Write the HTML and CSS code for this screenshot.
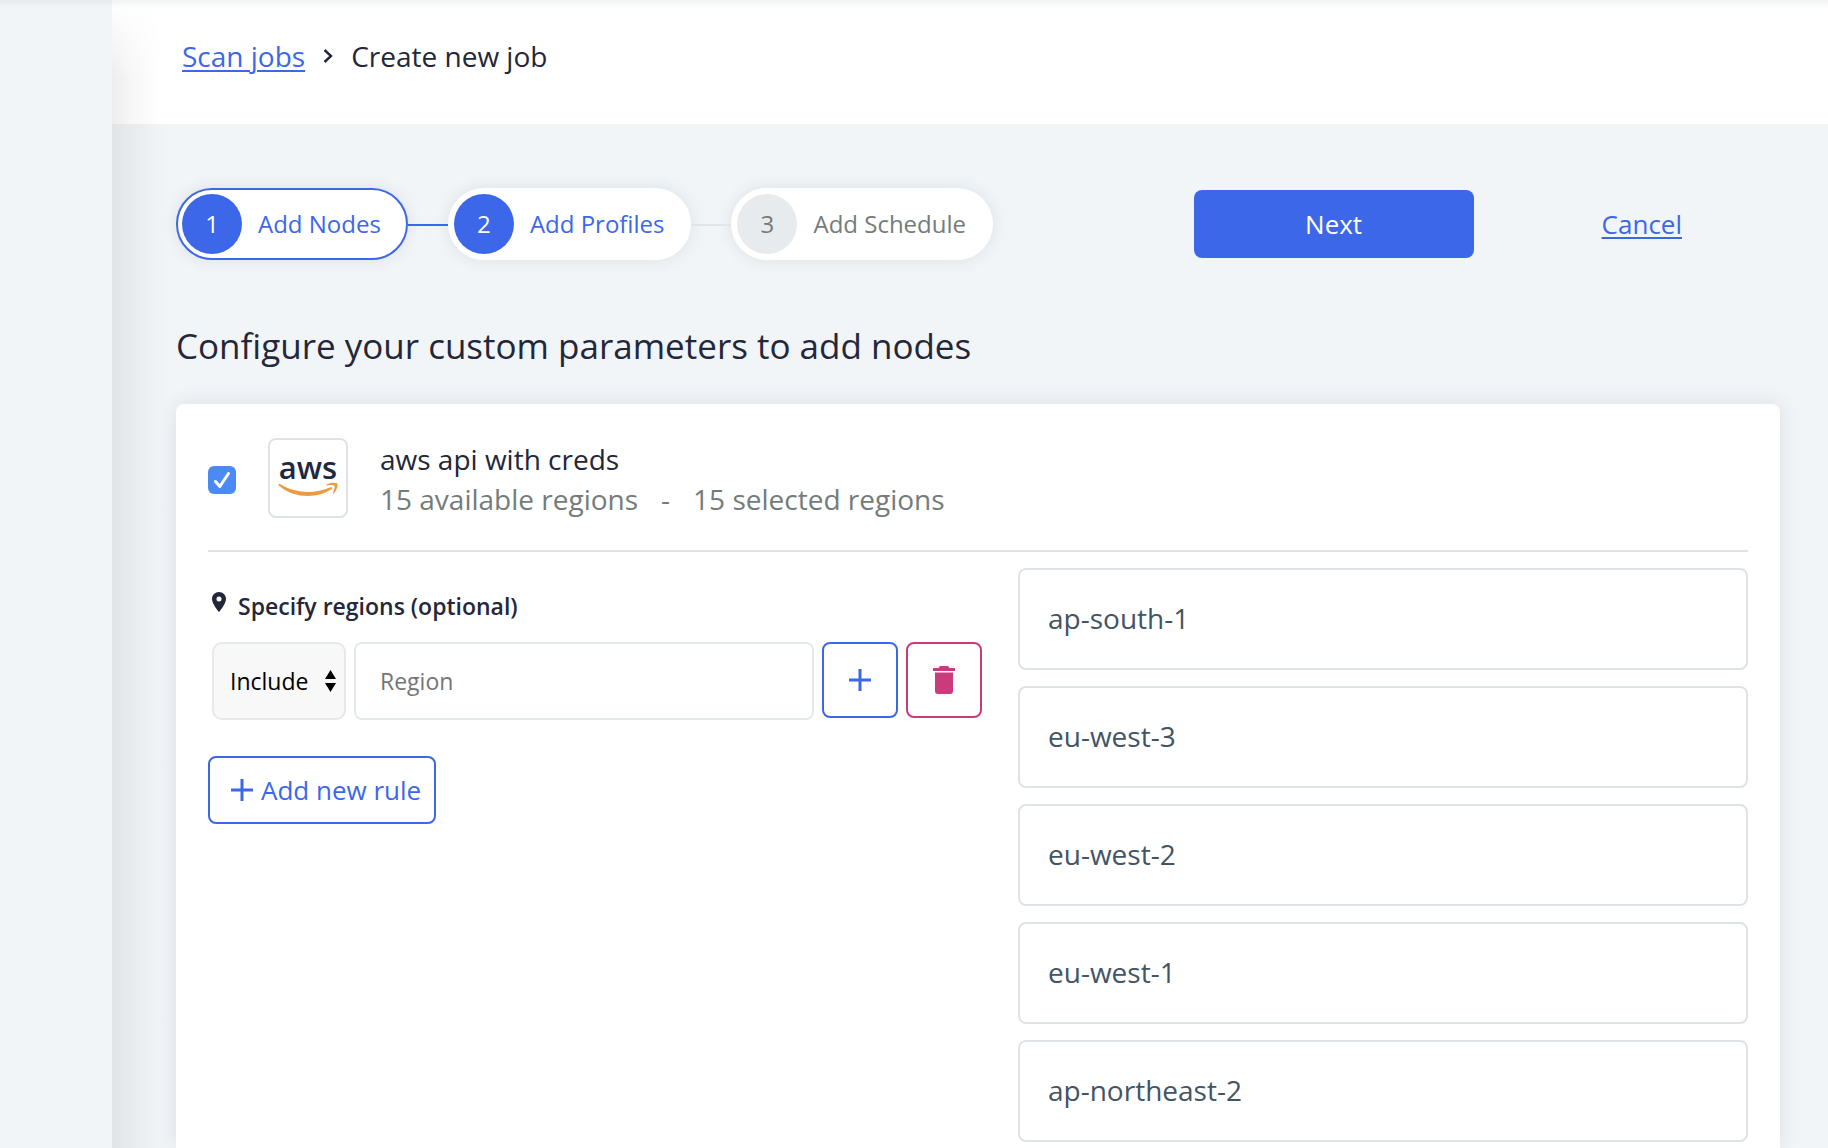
FILE: index.html
```html
<!DOCTYPE html>
<html lang="en">
<head>
<meta charset="utf-8">
<meta name="viewport" content="width=device-width, initial-scale=1">
<title>Create new job</title>
<link rel="stylesheet" href="styles.css">
</head>
<body>
<div class="app">
  <aside class="sidebar"></aside>
  <div class="page">
    <header class="topbar">
      <nav class="breadcrumbs" aria-label="Breadcrumb">
        <a class="link" href="#jobs">Scan jobs</a>
        <svg class="chevron" width="10" height="16" viewBox="0 0 10 16" aria-hidden="true"><path d="M1.5 2 L8 8 L1.5 14" fill="none" stroke="currentColor" stroke-width="2.4"/></svg>
        <span>Create new job</span>
      </nav>
    </header>
    <main class="content">
      <div class="wizard">
        <ol class="steps">
          <li class="step step-current"><span class="step-number">1</span><span class="step-label">Add Nodes</span></li>
          <li class="step step-ready"><span class="step-number">2</span><span class="step-label">Add Profiles</span></li>
          <li class="step"><span class="step-number">3</span><span class="step-label">Add Schedule</span></li>
        </ol>
        <div class="actions">
          <button class="next" type="button">Next</button>
          <a class="link cancel" href="#cancel">Cancel</a>
        </div>
      </div>

      <h1 class="title">Configure your custom parameters to add nodes</h1>

      <section class="card">
        <div class="card-head">
          <input class="check" type="checkbox" id="node" checked>
          <div class="logo">
            <svg width="76" height="76" viewBox="0 0 76 76" aria-hidden="true">
              <text class="logo-text" x="38" y="39" text-anchor="middle">aws</text>
              <path fill="#ee9b40" d="M8.4 44.6 C8.6 43.8 9.4 43.8 10.2 44.3 C26 53.6 44 54.3 60.6 47.3 C62 46.7 63 48 61.8 49 C47 59 23.500 58.500 8.800 45.400 Z"/>
              <path fill="#ee9b40" d="M56.600 44.600 C59.500 42.200 65.500 42.200 67.300 43.500 C68.300 45.500 66.500 51 63.600 53.600 C63 54 62.600 53.700 62.900 53 C64 50.500 65 47 64.600 45.900 C63.600 44.900 60 45 57.300 45.400 C56.500 45.500 56.100 45 56.600 44.600 Z"/>
            </svg>
          </div>
          <label class="node" for="node">
            <span class="node-name">aws api with creds</span>
            <span class="node-meta"><span>15 available regions</span><span>-</span><span>15 selected regions</span></span>
          </label>
        </div>

        <div class="card-body">
          <form class="rules">
            <fieldset class="rule-group">
              <legend class="rule-title">
                <svg class="pin" width="14" height="20" viewBox="0 0 14 20" aria-hidden="true"><path fill="currentColor" fill-rule="evenodd" d="M7 0 C3.100 0 0 3.100 0 7 C0 12 7 20 7 20 C7 20 14 12 14 7 C14 3.100 10.900 0 7 0 Z M7 4.500 A2.500 2.500 0 1 1 7 9.500 A2.500 2.500 0 1 1 7 4.500 Z"/></svg>
                Specify regions (optional)
              </legend>
              <div class="rule">
                <div class="select-box">
                  <select class="mode" aria-label="Rule type"><option>Include</option><option>Exclude</option></select>
                  <svg class="select-arrows" width="11" height="22" viewBox="0 0 11 22" aria-hidden="true"><path d="M5.500 0 L11 9 H0 Z M0 13 H11 L5.500 22 Z"/></svg>
                </div>
                <input class="region-input" type="text" placeholder="Region" aria-label="Region">
                <button class="icon-button" type="button" aria-label="Add region">
                  <svg width="22" height="22" viewBox="0 0 22 22" aria-hidden="true"><path d="M11 0 V22 M0 11 H22" fill="none" stroke="currentColor" stroke-width="3"/></svg>
                </button>
                <button class="icon-button danger" type="button" aria-label="Delete rule">
                  <svg width="22" height="28" viewBox="0 0 22 28" aria-hidden="true"><path fill="currentColor" d="M0 2 H5.500 L7 0 H15 L16.500 2 H22 V5 H0 Z M2 6.500 H20 V25 Q20 28 17 28 H5 Q2 28 2 25 Z"/></svg>
                </button>
              </div>
            </fieldset>
            <button class="add-rule" type="button">
              <svg width="22" height="22" viewBox="0 0 22 22" aria-hidden="true"><path d="M11 0 V22 M0 11 H22" fill="none" stroke="currentColor" stroke-width="3"/></svg>
              Add new rule
            </button>
          </form>
          <ul class="regions">
            <li class="region">ap-south-1</li>
            <li class="region">eu-west-3</li>
            <li class="region">eu-west-2</li>
            <li class="region">eu-west-1</li>
            <li class="region">ap-northeast-2</li>
          </ul>
        </div>
      </section>
    </main>
  </div>
</div>
</body>
</html>
```
FILE: styles.css
```css
:root {
  --blue: #3d67e9;
  --ink: #232739;
  --muted: #737c7a;
  --line: #dee3e7;
  --ground: #f1f5f8;
}

* { box-sizing: border-box; }

body {
  margin: 0;
  background: var(--ground);
  color: var(--ink);
  font: 28px/40px "Open Sans", "Noto Sans", sans-serif;
}

button, input, select { font: inherit; color: inherit; margin: 0; }

ol, ul { list-style: none; margin: 0; padding: 0; }

.app {
  display: flex;
  min-height: 100vh;
}

.sidebar {
  flex: 0 0 112px;
  background-image: linear-gradient(to bottom, rgba(50, 60, 70, .06), transparent 8px);
}

.page {
  display: flex;
  flex-direction: column;
  flex: 1;
  min-width: 0;
  background-image: linear-gradient(to right, rgba(0, 0, 0, .065), rgba(0, 0, 0, .035) 24px, rgba(0, 0, 0, .01) 42px, transparent 56px);
}

.topbar {
  height: 124px;
  padding: 36px 70px;
  background-color: #fff;
  background-image:
    linear-gradient(to bottom, rgba(50, 60, 70, .06), transparent 8px),
    linear-gradient(to bottom, #fff, rgba(255, 255, 255, 0) 80px),
    linear-gradient(to right, rgba(0, 0, 0, .07), rgba(0, 0, 0, .03) 20px, transparent 50px);
}

.breadcrumbs {
  display: flex;
  align-items: center;
  gap: 18px;
}

.link {
  color: var(--blue);
  text-decoration-thickness: 2px;
  text-underline-offset: 3px;
}

.content {
  display: flex;
  flex-direction: column;
  flex: 1;
  padding: 64px 48px 0 64px;
}

.wizard {
  display: flex;
  justify-content: space-between;
  align-items: center;
}

.steps {
  display: flex;
  gap: 40px;
  font-size: 24px;
}

.step {
  position: relative;
  display: flex;
  align-items: center;
  gap: 16px;
  height: 72px;
  padding: 0 25px 0 4px;
  border: 2px solid #fff;
  border-radius: 36px;
  background: #fff;
  box-shadow: 0 0 16px rgba(40, 50, 60, .1);
  color: var(--muted);
}

.step + .step::before {
  content: "";
  position: absolute;
  right: 100%;
  top: 34px;
  width: 40px;
  margin-right: 2px;
  height: 2px;
  background: #e0e5e9;
}

.step-current + .step::before { background: var(--blue); }

.step-current { border-color: var(--blue); }

.step-current, .step-ready { color: var(--blue); }

.step-number {
  width: 60px;
  border-radius: 50%;
  background: #e7ebee;
  line-height: 60px;
  text-align: center;
}

.step-current .step-number,
.step-ready .step-number {
  background: var(--blue);
  color: #fff;
}

.actions {
  display: flex;
  align-items: center;
  padding-right: 98px;
  gap: 128px;
  font-size: 26px;
}

.next {
  width: 280px;
  height: 68px;
  border: 0;
  border-radius: 8px;
  background: var(--blue);
  color: #fff;
}

.title {
  margin: 60px 0 32px;
  font-size: 35px;
  font-weight: 400;
  line-height: 52px;
}

.card {
  flex: 1;
  padding: 32px 32px 0;
  border-radius: 8px 8px 0 0;
  background: #fff;
  box-shadow: 0 0 20px rgba(40, 50, 60, .11);
}

.card-head {
  display: flex;
  align-items: center;
  gap: 32px;
  padding: 1px 0 31px;
  border-bottom: 2px solid var(--line);
}

.check {
  appearance: none;
  width: 28px;
  height: 28px;
  margin-top: 4px;
  border-radius: 6px;
  background: #4b8af4 url("data:image/svg+xml,%3Csvg xmlns='http://www.w3.org/2000/svg' viewBox='0 0 28 28'%3E%3Cpath d='M7.500 15.500 L11.800 20.500 L20.500 7.500' fill='none' stroke='white' stroke-width='3' stroke-linecap='round' stroke-linejoin='round'/%3E%3C/svg%3E");
}

.logo {
  display: flex;
  border: 2px solid var(--line);
  border-radius: 8px;
}

.logo-text {
  fill: #1f2840;
  font-size: 31px;
  font-weight: 600;
}

.node {
  display: grid;
  padding-top: 2px;
}

.node-meta {
  display: flex;
  gap: 23px;
  color: var(--muted);
}

.card-body {
  display: grid;
  grid-template-columns: 81fr 73fr;
}

.rules {
  padding: 34px 36px 0 0;
}

.rule-group {
  min-width: 0;
  margin: 0;
  padding: 0 0 0 4px;
  border: 0;
  font-size: 23px;
}

.rule-title {
  display: flex;
  gap: 12px;
  padding: 0;
  font-weight: 600;
}

.pin { margin-top: 6px; }

.rule {
  display: flex;
  gap: 8px;
  padding-top: 16px;
}

.select-box {
  position: relative;
  flex: 0 0 134px;
}

.mode {
  appearance: none;
  width: 100%;
  height: 78px;
  padding: 0 16px;
  border: 2px solid #e5e9ed;
  border-radius: 10px;
  background: #f8f8f8;
  color: #000;
}

.select-arrows {
  position: absolute;
  top: 28px;
  right: 10px;
  pointer-events: none;
}

.region-input {
  flex: 1;
  min-width: 0;
  height: 78px;
  padding: 0 24px;
  border: 2px solid #e5e9ed;
  border-radius: 8px;
  background: #fff;
}

.region-input::placeholder { color: #757575; }

.icon-button {
  display: grid;
  place-items: center;
  flex: 0 0 76px;
  height: 76px;
  padding: 0;
  border: 2px solid currentColor;
  border-radius: 8px;
  background: #fff;
  color: var(--blue);
}

.danger { color: #cb3b7c; }

.add-rule {
  display: flex;
  align-items: center;
  gap: 8px;
  height: 68px;
  margin-top: 36px;
  padding: 0 13px 0 21px;
  border: 2px solid currentColor;
  border-radius: 8px;
  background: #fff;
  color: var(--blue);
  font-size: 26px;
}

.regions {
  display: grid;
  align-content: start;
  gap: 16px;
  padding-top: 16px;
}

.region {
  padding: 28px 28px 30px;
  border: 2px solid var(--line);
  border-radius: 8px;
  color: #435465;
}
```
